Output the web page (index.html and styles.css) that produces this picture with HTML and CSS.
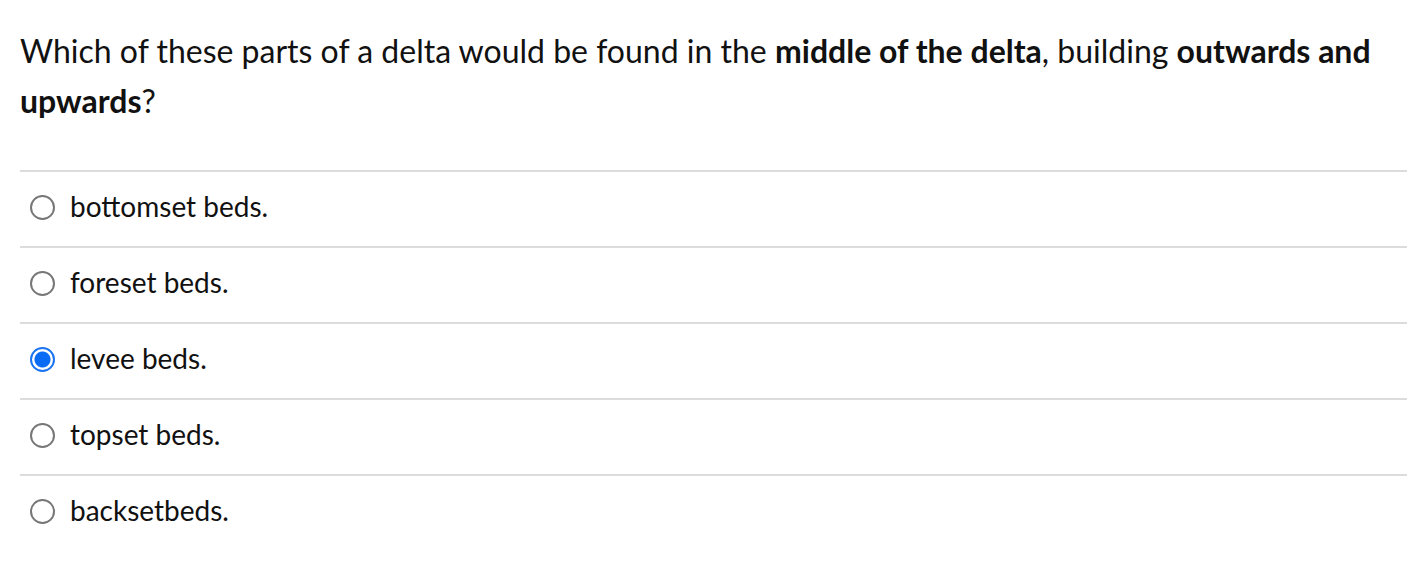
FILE: index.html
```html
<!DOCTYPE html>
<html>
<head>
<meta charset="utf-8">
<link rel="stylesheet" href="styles.css">
</head>
<body>
<div class="quiz">
  <p class="question">Which of these parts of a delta would be found in the <strong>middle of the delta</strong>, building <strong>outwards and upwards</strong>?</p>
  <ul class="answers">
    <li class="answer"><span class="radio"></span><span class="label">bottomset beds.</span></li>
    <li class="answer"><span class="radio"></span><span class="label">foreset beds.</span></li>
    <li class="answer"><span class="radio checked"></span><span class="label">levee beds.</span></li>
    <li class="answer"><span class="radio"></span><span class="label">topset beds.</span></li>
    <li class="answer"><span class="radio"></span><span class="label">backsetbeds.</span></li>
  </ul>
</div>
</body>
</html>
```
FILE: styles.css
```css
html, body {
  margin: 0;
  padding: 0;
  background: #fff;
}
body {
  font-family: Lato, "Open Sans", sans-serif;
  color: #111;
}
.quiz {
  padding: 26px 13px 0 20px;
}
.question {
  margin: 0 0 44px 0;
  font-size: 32px;
  line-height: 50px;
}
.question strong {
  font-weight: 700;
}
.answers {
  list-style: none;
  margin: 0;
  padding: 0;
}
.answer {
  box-sizing: border-box;
  display: flex;
  align-items: center;
  height: 76px;
  padding-bottom: 4px;
  border-top: 2px solid #dcdcdc;
  font-size: 28px;
}
.radio {
  box-sizing: border-box;
  width: 25px;
  height: 25px;
  border-radius: 50%;
  border: 2px solid #777;
  margin-left: 10px;
  margin-right: 15px;
  flex: none;
  background: #fff;
}
.radio.checked {
  border: 2px solid #1a73f0;
  background: radial-gradient(circle, #0a6cf5 0 7.5px, #fff 8.5px 9px);
}
.label {
  line-height: 1;
  padding-bottom: 2px;
}
```
